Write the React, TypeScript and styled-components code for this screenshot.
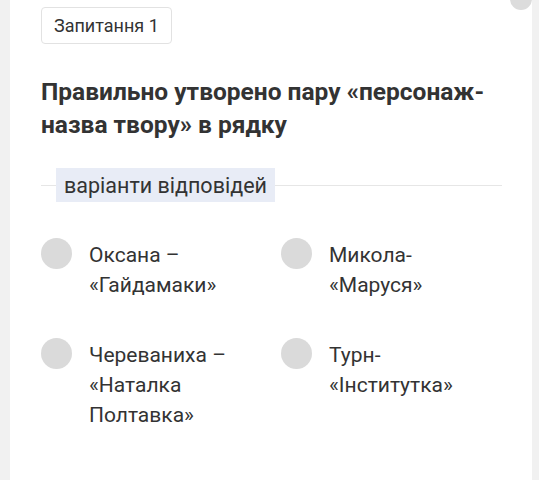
import React from "react";
import styled, { createGlobalStyle } from "styled-components";

const Global = createGlobalStyle`
  html, body { margin: 0; padding: 0; background: #f1f1f1; }
  body { font-family: Roboto, "Noto Sans", sans-serif; color: #333; }
`;

const Page = styled.div`
  display: flex;
  width: 539px;
  box-sizing: border-box;
  padding: 0 7px 0 10px;
  height: 480px;
  overflow: hidden;
`;

const Card = styled.div`
  position: relative;
  flex: 1;
  min-width: 0;
  background: #fff;
  padding: 7px 30px 0 31px;
`;

const Dot = styled.div`
  position: absolute;
  top: -12px;
  right: 0px;
  width: 22px;
  height: 22px;
  border-radius: 50%;
  background: #dcdcdc;
`;

const Badge = styled.div`
  display: inline-flex;
  align-items: center;
  height: 37px;
  box-sizing: border-box;
  padding: 0 12px;
  border: 1px solid #e2e2e2;
  border-radius: 4px;
  font-size: 18px;
  color: #333;
`;

const Title = styled.h2`
  margin: 31px 0 0;
  font-size: 24.5px;
  line-height: 33px;
  font-weight: 700;
  color: #333;
`;

const Divider = styled.div`
  margin-top: 27px;
  display: flex;
  align-items: center;
  &::before {
    content: "";
    width: 15px;
    height: 1px;
    background: #e6e6e6;
  }
  &::after {
    content: "";
    flex: 1;
    height: 1px;
    background: #e6e6e6;
  }
`;

const Label = styled.span`
  background: #e8ecf6;
  padding: 0 8px;
  height: 34px;
  display: flex;
  align-items: center;
  font-size: 21.5px;
  color: #333;
`;

const Options = styled.div`
  margin-top: 36px;
  display: grid;
  grid-template-columns: 240px 200px;
  row-gap: 38px;
`;

const Option = styled.div`
  display: flex;
  align-items: flex-start;
  gap: 17px;
  padding-right: 20px;
`;

const Radio = styled.span`
  flex: none;
  width: 31px;
  height: 31px;
  border-radius: 50%;
  background: #dadada;
`;

const OptText = styled.div`
  font-size: 21px;
  line-height: 30px;
  color: #333;
  margin-top: 2px;
`;

const options = [
  "Оксана – «Гайдамаки»",
  "Микола-«Маруся»",
  "Череваниха – «Наталка Полтавка»",
  "Турн-«Інститутка»",
];

function withBreaks(text: string) {
  const parts = text.split("-");
  return parts.map((p, i) => (
    <React.Fragment key={i}>
      {p}
      {i < parts.length - 1 && (
        <>
          -<wbr />
        </>
      )}
    </React.Fragment>
  ));
}

export default function App() {
  return (
    <>
      <Global />
      <Page>
        <Card>
          <Dot />
          <Badge>Запитання 1</Badge>
          <Title>Правильно утворено пару «персонаж-назва твору» в рядку</Title>
          <Divider>
            <Label>варіанти відповідей</Label>
          </Divider>
          <Options>
            {options.map((o) => (
              <Option key={o}>
                <Radio />
                <OptText>{withBreaks(o)}</OptText>
              </Option>
            ))}
          </Options>
        </Card>
      </Page>
    </>
  );
}
